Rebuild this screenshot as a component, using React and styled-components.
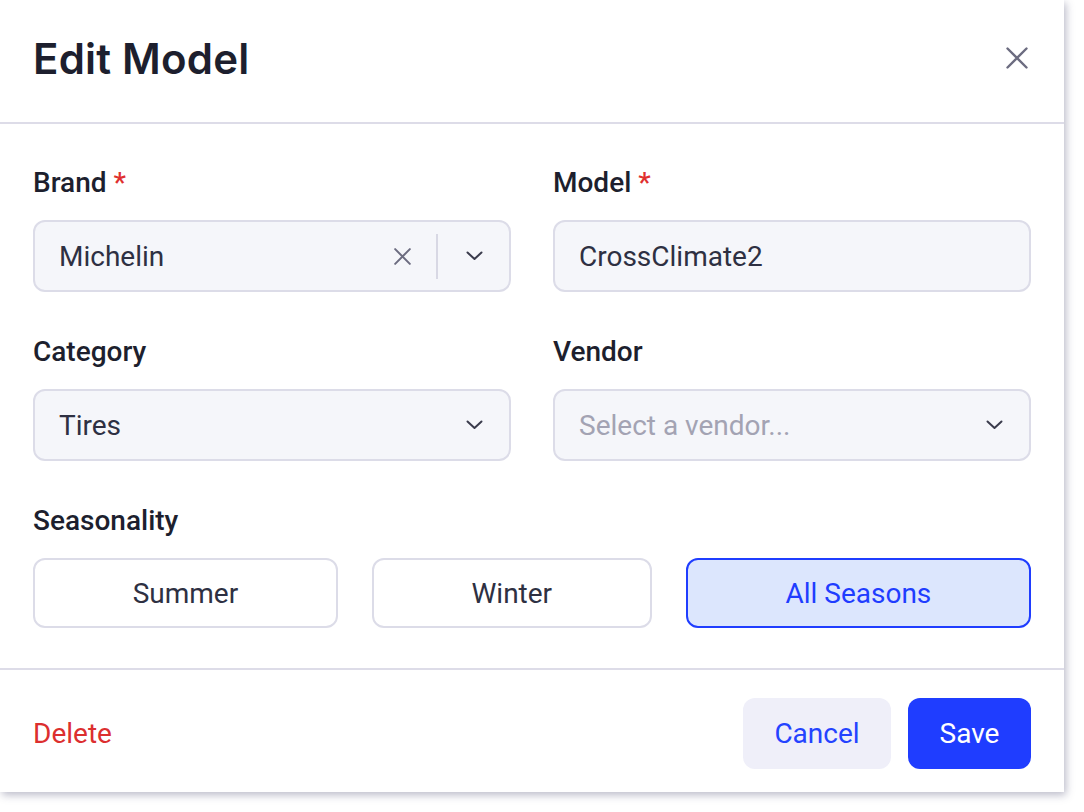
import { useState } from "react";
import styled, { createGlobalStyle } from "styled-components";

const GlobalStyle = createGlobalStyle`
  * { box-sizing: border-box; }
  body {
    margin: 0;
    min-height: 100vh;
    background: #fff;
    font-family: Roboto, "Liberation Sans", sans-serif;
  }
`;

const seasons = ["Summer", "Winter", "All Seasons"];

function CloseIcon({ size = 22, stroke = 2.4 }) {
  return (
    <svg width={size} height={size} viewBox="0 0 22 22" fill="none">
      <path d="M1.5 1.5 L20.5 20.5 M20.5 1.5 L1.5 20.5" stroke="currentColor" strokeWidth={stroke} strokeLinecap="round" />
    </svg>
  );
}

function Chevron() {
  return (
    <svg width="17" height="10" viewBox="0 0 17 10" fill="none">
      <path d="M1.5 1.5 L8.5 8 L15.5 1.5" stroke="currentColor" strokeWidth="2" strokeLinecap="round" strokeLinejoin="round" />
    </svg>
  );
}

function App() {
  const [season, setSeason] = useState("All Seasons");

  return (
    <>
      <GlobalStyle />
      <Dialog>
        <Header>
          <Title>Edit Model</Title>
          <CloseButton aria-label="Close">
            <CloseIcon />
          </CloseButton>
        </Header>

        <Body>
          <Grid>
            <Field>
              <Label>Brand <Req>*</Req></Label>
              <SelectBox>
                <Value>Michelin</Value>
                <ClearBtn><CloseIcon size={17} stroke={2.6} /></ClearBtn>
                <Sep />
                <ChevronWrap><Chevron /></ChevronWrap>
              </SelectBox>
            </Field>
            <Field>
              <Label>Model <Req>*</Req></Label>
              <TextInput defaultValue="CrossClimate2" />
            </Field>
            <Field>
              <Label>Category</Label>
              <SelectBox>
                <Value>Tires</Value>
                <ChevronWrap><Chevron /></ChevronWrap>
              </SelectBox>
            </Field>
            <Field>
              <Label>Vendor</Label>
              <SelectBox>
                <Value $placeholder>Select a vendor...</Value>
                <ChevronWrap><Chevron /></ChevronWrap>
              </SelectBox>
            </Field>
          </Grid>

          <Field>
            <Label>Seasonality</Label>
            <SeasonRow>
              {seasons.map((s) => (
                <SeasonButton key={s} $active={season === s} onClick={() => setSeason(s)}>
                  {s}
                </SeasonButton>
              ))}
            </SeasonRow>
          </Field>
        </Body>

        <Footer>
          <DeleteButton>Delete</DeleteButton>
          <Actions>
            <CancelButton>Cancel</CancelButton>
            <SaveButton>Save</SaveButton>
          </Actions>
        </Footer>
      </Dialog>
    </>
  );
}

const Dialog = styled.div`
  width: 1064px;
  height: 792px;
  background: #fff;
  display: flex;
  flex-direction: column;
  box-shadow: 2px 3px 8px rgba(60, 60, 100, 0.35);
`;

const Header = styled.div`
  height: 124px;
  padding: 0 33px 6px;
  display: flex;
  align-items: center;
  justify-content: space-between;
  border-bottom: 2px solid #dddce8;
`;

const Title = styled.h1`
  margin: 0;
  font-family: Inter, "Noto Sans", sans-serif;
  font-weight: 600;
  font-size: 42px;
  color: #1d1f2e;
  letter-spacing: 0.2px;
`;

const CloseButton = styled.button`
  border: 0;
  background: none;
  padding: 0;
  margin-right: 3px;
  color: #6c6c80;
  display: flex;
  cursor: pointer;
`;

const Body = styled.div`
  padding: 43px 33px 40px;
  border-bottom: 2px solid #dddce8;
  display: flex;
  flex-direction: column;
  gap: 44px;
`;

const Grid = styled.div`
  display: grid;
  grid-template-columns: 1fr 1fr;
  column-gap: 42px;
  row-gap: 44px;
`;

const Field = styled.div`
  display: flex;
  flex-direction: column;
  gap: 21px;
`;

const Label = styled.label`
  font-family: Roboto, "Liberation Sans", sans-serif;
  font-weight: 500;
  font-size: 28px;
  line-height: 32px;
  color: #1d1f2e;
`;

const Req = styled.span`
  color: #e0302f;
`;

const SelectBox = styled.div`
  height: 72px;
  border: 2px solid #dcdce8;
  border-radius: 12px;
  background: #f5f6fa;
  display: flex;
  align-items: center;
  padding: 0 26px 0 24px;
`;

const Value = styled.span`
  flex: 1;
  font-size: 28px;
  color: ${(p) => (p.$placeholder ? "#a3a3b3" : "#2e3042")};
`;

const ClearBtn = styled.span`
  display: flex;
  color: #6c6c80;
  margin-right: 25px;
`;

const Sep = styled.span`
  width: 2px;
  height: 45px;
  background: #d8d8e4;
  margin-right: 28px;
`;

const ChevronWrap = styled.span`
  display: flex;
  color: #3a3b4c;
`;

const TextInput = styled.input`
  height: 72px;
  border: 2px solid #dcdce8;
  border-radius: 12px;
  background: #f5f6fa;
  padding: 0 24px;
  font-family: Roboto, "Liberation Sans", sans-serif;
  font-size: 28px;
  color: #2e3042;
  outline: none;
`;

const SeasonRow = styled.div`
  display: flex;
  gap: 34px;
`;

const SeasonButton = styled.button`
  flex: 1 1 auto;
  height: 70px;
  border-radius: 12px;
  font-family: Roboto, "Liberation Sans", sans-serif;
  font-size: 28px;
  cursor: pointer;
  border: 2px solid ${(p) => (p.$active ? "#1f3dff" : "#dcdce8")};
  background: ${(p) => (p.$active ? "#dce6fd" : "#fff")};
  color: ${(p) => (p.$active ? "#1f3dff" : "#2e3042")};
`;

const Footer = styled.div`
  flex: 1;
  padding: 5px 33px 0;
  display: flex;
  align-items: center;
  justify-content: space-between;
`;

const DeleteButton = styled.button`
  border: 0;
  background: none;
  padding: 0;
  font-family: Roboto, "Liberation Sans", sans-serif;
  font-size: 28px;
  color: #dc2f2f;
  cursor: pointer;
`;

const Actions = styled.div`
  display: flex;
  gap: 17px;
`;

const BaseButton = styled.button`
  height: 71px;
  border: 0;
  border-radius: 12px;
  font-family: Roboto, "Liberation Sans", sans-serif;
  font-size: 28px;
  cursor: pointer;
`;

const CancelButton = styled(BaseButton)`
  width: 148px;
  background: #efeff9;
  color: #2443ff;
`;

const SaveButton = styled(BaseButton)`
  width: 123px;
  background: #1f3dff;
  color: #fff;
`;

export default App;
